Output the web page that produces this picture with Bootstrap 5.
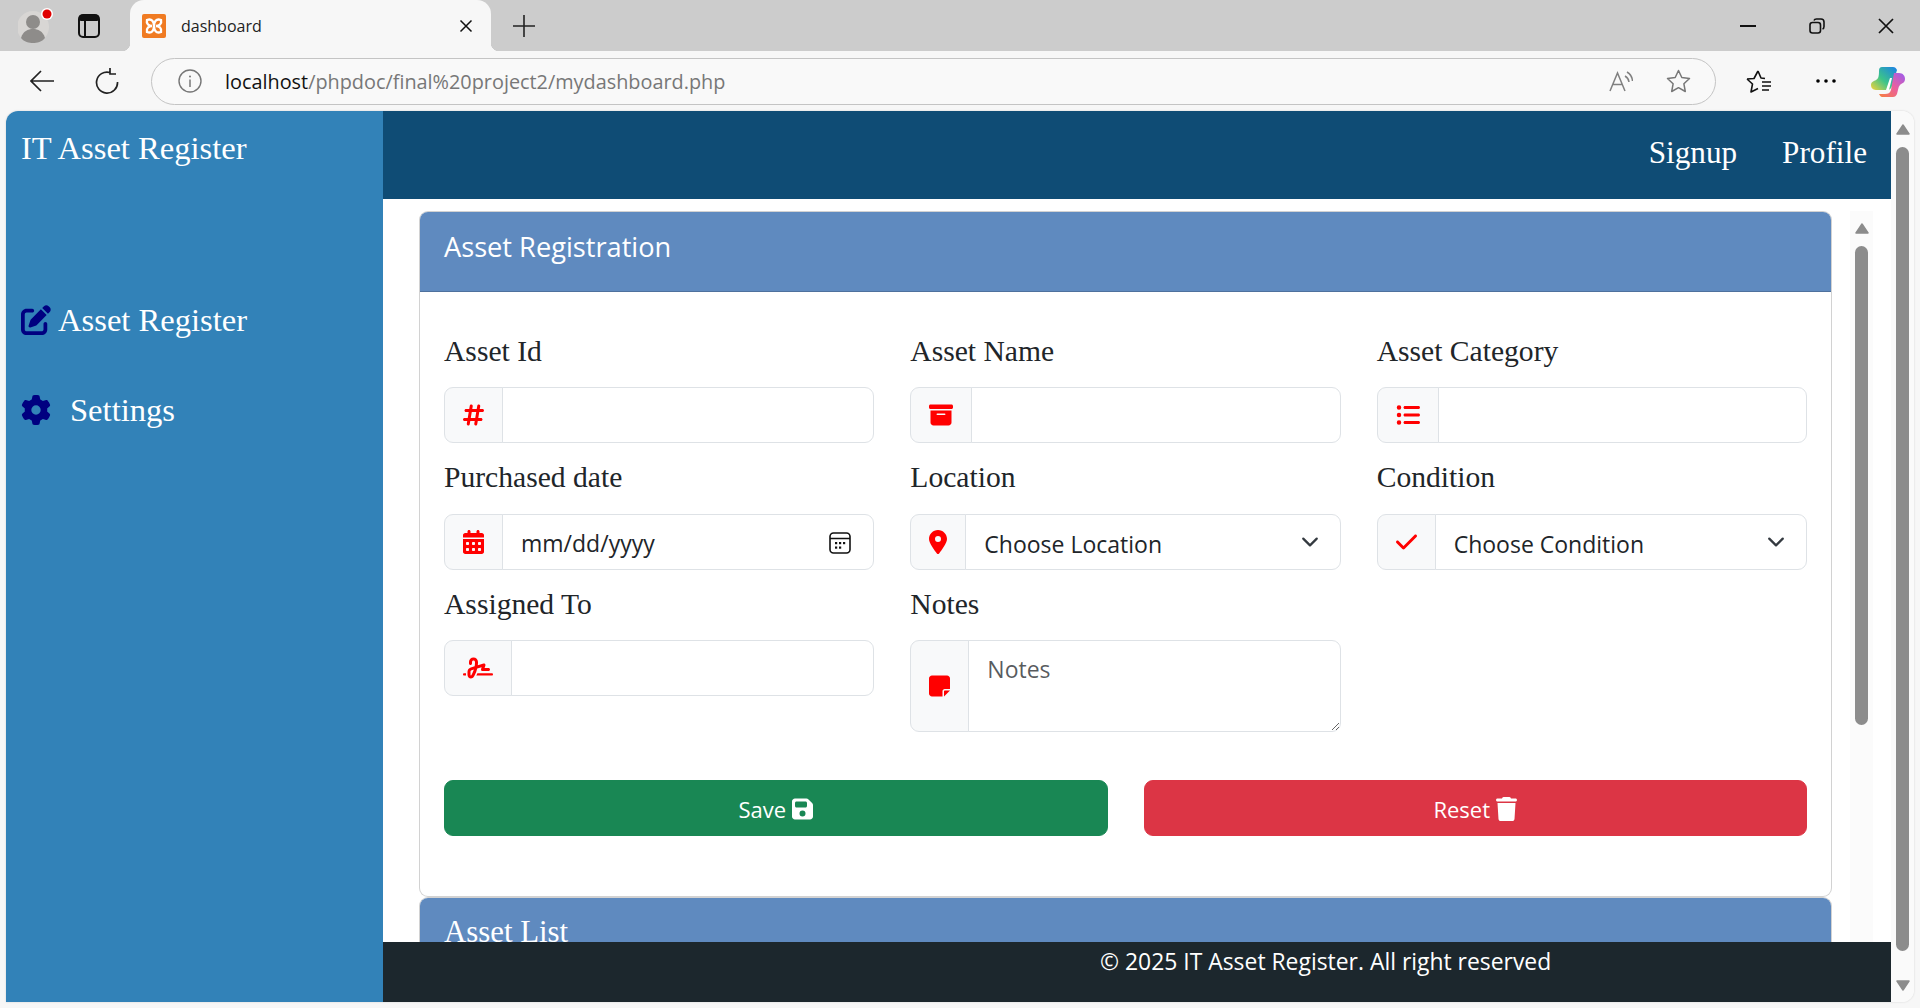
<!DOCTYPE html>
<html lang="en">
<head>
    <meta charset="UTF-8">
    <title>dashboard</title>
    <link href="https://cdn.jsdelivr.net/npm/bootstrap@5.3.0/dist/css/bootstrap.min.css" rel="stylesheet">
    <style>
        html { font-size: 24px; }
        body { --bs-body-font-family: "Open Sans", sans-serif; height: 1008px; overflow: hidden; background: #f7f7f7; }
        svg { display: block; flex: none; }

        /* browser chrome */
        .tab-strip { height: 51px; background: #ccc; padding-left: 130px; }
        .avatar-slot { margin-left: -130px; width: 130px; height: 51px; padding: 8px 0 0 18px; }
        .browser-tab { position: relative; width: 361px; height: 51px; background: #f7f7f7; border-radius: 14px 14px 0 0; font-size: 16px; color: #222; padding-left: 12px; }
        .browser-tab::before, .browser-tab::after { content: ""; position: absolute; bottom: 0; width: 8px; height: 8px; }
        .browser-tab::before { left: -8px; background: radial-gradient(circle at 0 0, #ccc 8px, #f7f7f7 8.5px); }
        .browser-tab::after { right: -8px; background: radial-gradient(circle at 100% 0, #ccc 8px, #f7f7f7 8.5px); }
        .tab-title { margin-left: 15px; width: 278px; }
        .toolbar { height: 60px; }
        .addr-bar { margin-left: 32px; width: 1565px; height: 47px; border: 1.5px solid #c4c4c4; border-radius: 24px; background: #f9f9f9; font-size: 19.85px; color: #777; }
        .addr-bar b { font-weight: 400; color: #111; }
        .addr-text { margin-left: 23px; padding-top: 1px; }

        /* viewport */
        .viewport { margin: 0 6px 0 6px; height: 891px; background: #fff; border-radius: 12px 12px 12px 0; overflow: hidden; box-shadow: 0 0 2px #ccc; }
        .side-panel { width: 377px; background: #3282b8; color: #fff; font-family: "Liberation Serif", serif; font-size: 32.6px; padding: 13px 0 0 15px; line-height: 48px; }
        .side-link { margin-top: 124px; }
        .side-link + .side-link { margin-top: 42px; }
        .side-link svg { fill: #000080; }
        .top-head { height: 88px; background: #0f4c75; color: #fff; font-family: "Liberation Serif", serif; font-size: 31.2px; padding: 0 24px 4px 0; gap: 45px; }
        .work-area { height: 743px; }
        .form-pane { margin-left: 36px; padding-top: 12px; width: 1413px; flex: none; }
        .pane-head { height: 80px; background: #5f8abf; color: #fff; font-size: 27.2px; padding: 0 24px 9px; border-bottom: 1px solid rgba(0,0,0,.175); border-radius: 8px 8px 0 0; }
        .field-label { display: block; margin: 12px 0 14.5px; line-height: 44px; font-family: "Liberation Serif", serif; font-size: 29.6px; color: #212529; }
        .form-control, .form-select { font-size: 23px; line-height: 36px; height: 56px; }
        .form-select { padding-top: 11px; padding-bottom: 9px; background-size: 24px 18px; }
        textarea.form-control { height: 92px; resize: both; padding-top: 10px; }
        input[type=date].form-control { padding-top: 11px; padding-bottom: 9px; }
        .form-control::-webkit-calendar-picker-indicator { width: 24px; height: 24px; padding: 0; margin: 0 3px 0 0;
            background: url("data:image/svg+xml,%3Csvg xmlns='http://www.w3.org/2000/svg' viewBox='0 0 24 24'%3E%3Crect x='2' y='2' width='20' height='20' rx='3.5' fill='none' stroke='%23111' stroke-width='1.6'/%3E%3Cpath d='M2 7.500h20' stroke='%23111' stroke-width='1.600'/%3E%3Cg fill='%23111'%3E%3Crect x='7' y='11' width='2.200' height='2.200'/%3E%3Crect x='11' y='11' width='2.200' height='2.200'/%3E%3Crect x='15' y='11' width='2.200' height='2.200'/%3E%3Crect x='7' y='15.500' width='2.200' height='2.200'/%3E%3Crect x='11' y='15.500' width='2.200' height='2.200'/%3E%3C/g%3E%3C/svg%3E") center/contain no-repeat; }
        .input-group-text svg { fill: #f00; height: 24px; }
        .btn-bar { margin-top: 48px; padding-bottom: 60px; }
        .btn { font-size: 22px; line-height: 36px; height: 56px; padding-top: 11px; padding-bottom: 9px; gap: 6px; }
        .btn svg { fill: #fff; height: 24px; }
        .list-head { height: 60px; background: #5f8abf; color: #fff; font-family: "Liberation Serif", serif; font-size: 30.8px; padding: 11px 24px 0; border-radius: 8px 8px 0 0; }
        .page-foot { height: 60px; background: #1c272d; color: #fff; font-size: 22.9px; line-height: 36px; padding: 2px 0 0 717px; }

        /* scrollbars */
        .scroll-col { width: 23px; flex: none; }
        .inner-scroll { margin-left: 18px; margin-top: 12px; background: #fbfbfb; padding-top: 12px; }
        .scroll-arrow { margin: 0 auto; }
        .scroll-thumb { width: 13px; margin: 12px auto 0; background: #8c8c8c; border-radius: 7px; }
        .outer-scroll { background: #fafafa; padding-top: 13px; }
        .outer-scroll .scroll-thumb { height: 804px; }
        .outer-scroll .arrow-down { margin-top: 29px; }
        .inner-scroll .scroll-thumb { height: 479px; }
    </style>
</head>
<body>
    <!-- tab strip -->
    <div class="tab-strip d-flex align-items-center">
        <div class="avatar-slot d-flex align-items-start">
            <svg width="36" height="36" viewBox="0 0 36 36"><circle cx="15" cy="19" r="16" fill="#d8d6d4"/><circle cx="15" cy="14" r="7" fill="#8e8c8a"/><path d="M3 30c2-7 7-9 12-9s10 2 12 9c-3 4-8 5-12 5s-9-1-12-5z" fill="#8e8c8a"/><circle cx="29" cy="6" r="6" fill="#fff"/><circle cx="29" cy="6" r="4.5" fill="#e00000"/></svg>
            <svg class="ms-3" width="22" height="24" viewBox="0 0 22 24" style="margin-top:6px"><rect x="1" y="1" width="20" height="22" rx="4" fill="none" stroke="#111" stroke-width="2"/><rect x="1" y="1" width="20" height="6" rx="2" fill="#111"/><path d="M7 6v17" stroke="#111" stroke-width="2"/></svg>
        </div>
        <div class="browser-tab d-flex align-items-center">
            <svg width="24" height="24" viewBox="0 0 24 24"><rect width="24" height="24" rx="2" fill="#f07b22"/><path d="M5 6c5-2 7 2 7 6 0-4 2-8 7-6 1 4-2 6-5 6 3 0 6 2 5 6-5 2-7-2-7-6 0 4-2 8-7 6-1-4 2-6 5-6-3 0-6-2-5-6z" fill="none" stroke="#fff" stroke-width="2.4"/></svg>
            <span class="tab-title">dashboard</span>
            <svg width="14" height="14" viewBox="0 0 14 14"><path d="M1.5 1.5l11 11M12.5 1.5l-11 11" stroke="#111" stroke-width="1.5"/></svg>
        </div>
        <svg style="margin-left:22px" width="22" height="22" viewBox="0 0 22 22"><path d="M11 0v22M0 11h22" stroke="#222" stroke-width="1.6"/></svg>
        <div class="ms-auto d-flex align-items-center" style="gap:53px;padding-right:26px">
            <svg width="16" height="2" viewBox="0 0 16 2"><path d="M0 1h16" stroke="#111" stroke-width="2"/></svg>
            <svg width="16" height="16" viewBox="0 0 16 16"><rect x="1" y="4.5" width="10.5" height="10.5" rx="2.5" fill="none" stroke="#111" stroke-width="1.6"/><path d="M5 2.5q.5-1.5 2.5-1.5h4.5q3 0 3 3v4.500q0 2-1.500 2.500" fill="none" stroke="#111" stroke-width="1.600"/></svg>
            <svg width="16" height="16" viewBox="0 0 16 16"><path d="M1 1l14 14M15 1L1 15" stroke="#111" stroke-width="1.700"/></svg>
        </div>
    </div>

    <!-- toolbar -->
    <div class="toolbar d-flex align-items-center">
        <svg style="margin-left:30px" width="24" height="22" viewBox="0 0 24 22"><path d="M11 1L1 11l10 10M1 11h23" fill="none" stroke="#222" stroke-width="1.7"/></svg>
        <svg style="margin-left:41px" width="24" height="26" viewBox="0 0 24 26"><path d="M15 4.500A10.500 10.500 0 1 0 22.500 14M15 0v6h6" fill="none" stroke="#222" stroke-width="1.700"/></svg>
        <div class="addr-bar d-flex align-items-center">
            <svg style="margin-left:26px" width="24" height="24" viewBox="0 0 24 24"><circle cx="12" cy="12" r="11" fill="none" stroke="#777" stroke-width="1.400"/><path d="M12 10.500v7.500" stroke="#777" stroke-width="1.500"/><circle cx="12" cy="7.500" r="1" fill="#777"/></svg>
            <span class="addr-text"><b>localhost</b>/phpdoc/final%20project2/mydashboard.php</span>
            <svg class="ms-auto" width="24" height="22" viewBox="0 0 24 22"><path d="M1 21L8.500 3 16 21M4 14.500h9.500M16 6q3.500 2 4 6M18 2q5 3 5.500 9" fill="none" stroke="#808080" stroke-width="1.500"/></svg>
            <svg style="margin:0 24px 0 33px" width="25" height="24" viewBox="0 0 25 24"><path d="M12.500 1.500l3.300 7 7.700 1-5.600 5.300 1.400 7.700-6.800-3.800-6.800 3.800 1.400-7.700L1.500 9.500l7.700-1z" fill="none" stroke="#777" stroke-width="1.500" stroke-linejoin="round"/></svg>
        </div>
        <svg style="margin-left:30px" width="25" height="25" viewBox="0 0 25 25"><path d="M12 2l3 7 4 .5M1 10l7-.5L12 2M1 10l5.500 5-1.500 8 7-3.500M16 13h9M16 17h9M16 21h7" fill="none" stroke="#111" stroke-width="1.600" stroke-linejoin="round"/></svg>
        <svg style="margin-left:45px" width="20" height="4" viewBox="0 0 20 4"><circle cx="2" cy="2" r="1.800"/><circle cx="10" cy="2" r="1.800"/><circle cx="18" cy="2" r="1.800"/></svg>
        <svg style="margin-left:35px" width="34" height="31" viewBox="0 0 34 31">
            <defs>
                <linearGradient id="cpA" x1="0" y1="1" x2="1" y2="0"><stop offset="0" stop-color="#f5d23a"/><stop offset=".45" stop-color="#3cc48a"/><stop offset="1" stop-color="#1a7fe8"/></linearGradient>
                <linearGradient id="cpB" x1="0" y1="1" x2="1" y2="0"><stop offset="0" stop-color="#f7803c"/><stop offset=".5" stop-color="#ea5f9e"/><stop offset="1" stop-color="#9a5cf0"/></linearGradient>
            </defs>
            <path d="M11 1h11c2 0 3 1 4 3l-5 16c-1 3-3 4-5 4H6c-3 0-6-1-6-5 0-3 3-4 5-5 2-1 3-3 3-9 0-3 1-4 3-4z" fill="url(#cpA)"/>
            <path d="M23 7h5c4 0 6 3 6 6 0 4-3 4-5 6-2 2-2 6-3 9-1 2-2 3-4 3H11c-1 0-2-1-3-3h6c3 0 5-1 6-4z" fill="url(#cpB)"/>
            <path d="M19 12l-4 12h3l3-12z" fill="#fff"/>
        </svg>
    </div>

    <!-- page -->
    <div class="viewport d-flex">
        <aside class="side-panel">
            <div>IT Asset Register</div>
            <div class="side-link d-flex align-items-center">
                <svg height="30" viewBox="0 0 512 512"><path d="M471.6 21.7c-21.9-21.9-57.3-21.9-79.2 0L362.3 51.7l97.9 97.9 30.1-30.1c21.9-21.9 21.9-57.3 0-79.2L471.6 21.7zm-299.2 220c-6.1 6.1-10.8 13.6-13.5 21.9l-29.6 88.8c-2.9 8.6-.6 18.1 5.8 24.6s15.900 8.700 24.600 5.800l88.800-29.600c8.200-2.700 15.700-7.400 21.900-13.500L437.700 172.300 339.700 74.300 172.400 241.700zM96 64C43 64 0 107 0 160V416c0 53 43 96 96 96H352c53 0 96-43 96-96V320c0-17.700-14.300-32-32-32s-32 14.300-32 32v96c0 17.700-14.300 32-32 32H96c-17.700 0-32-14.300-32-32V160c0-17.700 14.300-32 32-32h96c17.700 0 32-14.300 32-32s-14.300-32-32-32H96z"/></svg>
                <span style="margin-left:7px">Asset Register</span>
            </div>
            <div class="side-link d-flex align-items-center">
                <svg height="30" viewBox="0 0 512 512"><path d="M495.900 166.600c3.200 8.700 .5 18.400-6.400 24.600l-43.300 39.400c1.100 8.300 1.700 16.800 1.700 25.400s-.6 17.100-1.700 25.400l43.300 39.400c6.900 6.200 9.600 15.900 6.400 24.600c-4.400 11.900-9.700 23.300-15.800 34.300l-4.700 8.100c-6.600 11-14 21.400-22.100 31.200c-5.900 7.200-15.700 9.600-24.500 6.800l-55.700-17.700c-13.400 10.300-28.200 18.900-44 25.400l-12.500 57.100c-2 9.100-9 16.300-18.200 17.800c-13.800 2.300-28 3.500-42.500 3.500s-28.700-1.200-42.500-3.500c-9.200-1.500-16.200-8.700-18.200-17.800l-12.500-57.100c-15.800-6.500-30.600-15.100-44-25.400L83.100 425.900c-8.800 2.800-18.600 .3-24.500-6.800c-8.100-9.800-15.500-20.200-22.100-31.200l-4.700-8.100c-6.100-11-11.400-22.400-15.800-34.300c-3.200-8.700-.5-18.400 6.400-24.600l43.300-39.400C64.600 273.100 64 264.600 64 256s.6-17.100 1.700-25.400L22.400 191.200c-6.900-6.200-9.600-15.900-6.400-24.600c4.400-11.900 9.700-23.300 15.800-34.300l4.700-8.100c6.600-11 14-21.400 22.100-31.200c5.900-7.200 15.700-9.600 24.500-6.800l55.700 17.700c13.400-10.300 28.200-18.900 44-25.400l12.500-57.100c2-9.100 9-16.300 18.200-17.800C227.300 1.200 241.500 0 256 0s28.700 1.200 42.500 3.500c9.200 1.500 16.200 8.700 18.200 17.800l12.500 57.100c15.800 6.500 30.600 15.100 44 25.400l55.700-17.700c8.800-2.800 18.600-.3 24.500 6.800c8.100 9.800 15.500 20.200 22.100 31.200l4.700 8.100c6.100 11 11.400 22.400 15.800 34.300zM256 336a80 80 0 1 0 0-160 80 80 0 1 0 0 160z"/></svg>
                <span style="margin-left:19px">Settings</span>
            </div>
        </aside>

        <div class="flex-grow-1 d-flex flex-column">
            <header class="top-head d-flex align-items-center justify-content-end">
                <span>Signup</span>
                <span>Profile</span>
            </header>

            <div class="work-area d-flex overflow-hidden">
                <div class="form-pane">
                    <div class="card">
                        <div class="pane-head d-flex align-items-center">Asset Registration</div>
                        <div class="card-body" style="padding-top:24.5px;padding-bottom:0">
                            <div class="row">
                                <div class="col-4">
                                    <label class="field-label">Asset Id</label>
                                    <div class="input-group">
                                        <span class="input-group-text"><svg viewBox="0 0 448 512"><path d="M181.300 32.400c17.400 2.900 29.200 19.400 26.300 36.800L197.800 128h95.100l11.500-69.300c2.900-17.400 19.400-29.200 36.800-26.300s29.200 19.400 26.300 36.800L357.800 128H416c17.700 0 32 14.300 32 32s-14.300 32-32 32H347.100L325.800 320H384c17.700 0 32 14.300 32 32s-14.300 32-32 32H315.100l-11.500 69.300c-2.900 17.400-19.400 29.200-36.800 26.300s-29.200-19.400-26.300-36.800l9.800-58.700H155.100l-11.500 69.300c-2.900 17.400-19.400 29.200-36.800 26.300s-29.200-19.400-26.300-36.800L90.200 384H32c-17.700 0-32-14.300-32-32s14.300-32 32-32h68.900l21.300-128H64c-17.700 0-32-14.300-32-32s14.300-32 32-32h68.900l11.500-69.300c2.900-17.400 19.400-29.200 36.800-26.300zM187.100 192L165.800 320h95.100l21.300-128H187.100z"/></svg></span>
                                        <input type="text" class="form-control">
                                    </div>
                                </div>
                                <div class="col-4">
                                    <label class="field-label">Asset Name</label>
                                    <div class="input-group">
                                        <span class="input-group-text"><svg viewBox="0 0 512 512"><path d="M32 32H480c17.700 0 32 14.300 32 32V96c0 17.700-14.300 32-32 32H32C14.300 128 0 113.700 0 96V64C0 46.300 14.300 32 32 32zm0 128H480V416c0 35.300-28.700 64-64 64H96c-35.300 0-64-28.700-64-64V160zm128 80c0 8.800 7.200 16 16 16H336c8.800 0 16-7.200 16-16s-7.200-16-16-16H176c-8.800 0-16 7.200-16 16z"/></svg></span>
                                        <input type="text" class="form-control">
                                    </div>
                                </div>
                                <div class="col-4">
                                    <label class="field-label">Asset Category</label>
                                    <div class="input-group">
                                        <span class="input-group-text"><svg viewBox="0 0 512 512"><path d="M64 144a48 48 0 1 0 0-96 48 48 0 1 0 0 96zM192 64c-17.700 0-32 14.300-32 32s14.300 32 32 32H480c17.700 0 32-14.300 32-32s-14.300-32-32-32H192zm0 160c-17.700 0-32 14.300-32 32s14.300 32 32 32H480c17.700 0 32-14.300 32-32s-14.300-32-32-32H192zm0 160c-17.700 0-32 14.300-32 32s14.300 32 32 32H480c17.700 0 32-14.300 32-32s-14.300-32-32-32H192zM64 464a48 48 0 1 0 0-96 48 48 0 1 0 0 96zm48-208a48 48 0 1 0 -96 0 48 48 0 1 0 96 0z"/></svg></span>
                                        <input type="text" class="form-control">
                                    </div>
                                </div>
                                <div class="col-4">
                                    <label class="field-label">Purchased date</label>
                                    <div class="input-group">
                                        <span class="input-group-text"><svg viewBox="0 0 448 512"><path d="M128 0c17.700 0 32 14.300 32 32V64H288V32c0-17.700 14.300-32 32-32s32 14.300 32 32V64h48c26.500 0 48 21.500 48 48v48H0V112C0 85.500 21.500 64 48 64H96V32c0-17.700 14.300-32 32-32zM0 192H448V464c0 26.500-21.500 48-48 48H48c-26.500 0-48-21.500-48-48V192zm64 80v32c0 8.800 7.200 16 16 16h32c8.800 0 16-7.200 16-16V272c0-8.800-7.200-16-16-16H80c-8.800 0-16 7.200-16 16zm128 0v32c0 8.800 7.200 16 16 16h32c8.800 0 16-7.200 16-16V272c0-8.800-7.200-16-16-16H208c-8.800 0-16 7.200-16 16zm144-16c-8.800 0-16 7.200-16 16v32c0 8.800 7.200 16 16 16h32c8.800 0 16-7.200 16-16V272c0-8.800-7.200-16-16-16H336zM64 400v32c0 8.800 7.200 16 16 16h32c8.800 0 16-7.200 16-16V400c0-8.800-7.200-16-16-16H80c-8.800 0-16 7.200-16 16zm144-16c-8.800 0-16 7.200-16 16v32c0 8.800 7.200 16 16 16h32c8.800 0 16-7.200 16-16V400c0-8.800-7.200-16-16-16H208zm112 16v32c0 8.800 7.200 16 16 16h32c8.800 0 16-7.200 16-16V400c0-8.800-7.200-16-16-16H336c-8.800 0-16 7.200-16 16z"/></svg></span>
                                        <input type="date" class="form-control">
                                    </div>
                                </div>
                                <div class="col-4">
                                    <label class="field-label">Location</label>
                                    <div class="input-group">
                                        <span class="input-group-text"><svg viewBox="0 0 384 512"><path d="M215.700 499.200C267 435 384 279.400 384 192C384 86 298 0 192 0S0 86 0 192c0 87.400 117 243 168.300 307.200c12.300 15.300 35.100 15.300 47.400 0zM192 128a64 64 0 1 1 0 128 64 64 0 1 1 0-128z"/></svg></span>
                                        <select class="form-select"><option>Choose Location</option></select>
                                    </div>
                                </div>
                                <div class="col-4">
                                    <label class="field-label">Condition</label>
                                    <div class="input-group">
                                        <span class="input-group-text"><svg viewBox="0 0 448 512"><path d="M438.600 105.400c12.500 12.500 12.500 32.800 0 45.300l-256 256c-12.500 12.500-32.800 12.500-45.300 0l-128-128c-12.500-12.500-12.500-32.800 0-45.300s32.800-12.500 45.300 0L160 338.700 393.400 105.400c12.500-12.500 32.800-12.500 45.300 0z"/></svg></span>
                                        <select class="form-select"><option>Choose Condition</option></select>
                                    </div>
                                </div>
                                <div class="col-4">
                                    <label class="field-label">Assigned To</label>
                                    <div class="input-group">
                                        <span class="input-group-text"><svg viewBox="0 0 640 512"><path d="M192 128c0-17.700 14.300-32 32-32s32 14.300 32 32v7.800c0 27.700-2.400 55.300-7.100 82.500l-84.400 25.300c-40.600 12.200-68.500 49.600-68.500 92v71.900c0 40 32.500 72.500 72.500 72.500c26 0 50-13.900 62.900-36.500l13.900-24.300c26.800-47 46.500-97.700 58.400-150.500l94.400-28.300-12.500 37.500c-3.300 9.800-1.600 20.500 4.400 28.800s15.700 13.300 26 13.300H544c17.700 0 32-14.300 32-32s-14.300-32-32-32H460.400l18-53.900c3.800-11.300 .9-23.800-7.400-32.400s-20.700-11.800-32.200-8.400L316.400 198.100c2.400-20.700 3.600-41.400 3.600-62.300V128c0-53-43-96-96-96s-96 43-96 96v32c0 17.700 14.300 32 32 32s32-14.300 32-32V128zm-9.200 177l49-14.700c-10.400 33.800-24.500 66.400-42.100 97.200l-13.900 24.300c-1.500 2.600-4.300 4.300-7.400 4.300c-4.700 0-8.500-3.800-8.500-8.500V335.600c0-14.100 9.300-26.600 22.800-30.700zM24 368c-13.300 0-24 10.700-24 24s10.700 24 24 24H64.300c-.2-2.800-.3-5.600-.3-8.500V368H24zm592 48c13.300 0 24-10.700 24-24s-10.700-24-24-24H305.900c-6.700 16.300-14.200 32.300-22.300 48H616z"/></svg></span>
                                        <input type="text" class="form-control">
                                    </div>
                                </div>
                                <div class="col-4">
                                    <label class="field-label">Notes</label>
                                    <div class="input-group">
                                        <span class="input-group-text"><svg viewBox="0 0 448 512"><path d="M64 32C28.700 32 0 60.700 0 96V416c0 35.300 28.700 64 64 64H288V368c0-26.500 21.500-48 48-48H448V96c0-35.300-28.700-64-64-64H64zM448 352H402.700 336c-8.800 0-16 7.200-16 16v66.700V480l32-32 64-64 32-32z"/></svg></span>
                                        <textarea class="form-control" rows="2" placeholder="Notes"></textarea>
                                    </div>
                                </div>
                            </div>
                            <div class="row btn-bar">
                                <div class="col-6">
                                    <button class="btn btn-success w-100 d-flex align-items-center justify-content-center">Save <svg viewBox="0 0 448 512"><path d="M64 32C28.700 32 0 60.700 0 96V416c0 35.300 28.700 64 64 64H384c35.300 0 64-28.700 64-64V173.300c0-17-6.700-33.300-18.700-45.300L352 50.700C340 38.700 323.700 32 306.700 32H64zm0 96c0-17.700 14.300-32 32-32H288c17.700 0 32 14.300 32 32v64c0 17.700-14.300 32-32 32H96c-17.700 0-32-14.300-32-32V128zM224 288a64 64 0 1 1 0 128 64 64 0 1 1 0-128z"/></svg></button>
                                </div>
                                <div class="col-6">
                                    <button class="btn btn-danger w-100 d-flex align-items-center justify-content-center">Reset <svg viewBox="0 0 448 512"><path d="M135.200 17.700L128 32H32C14.300 32 0 46.300 0 64S14.300 96 32 96H416c17.700 0 32-14.300 32-32s-14.300-32-32-32H320l-7.200-14.300C307.400 6.800 296.300 0 284.200 0H163.800c-12.100 0-23.200 6.800-28.600 17.700zM416 128H32L53.200 467c1.600 25.300 22.600 45 47.900 45H346.900c25.300 0 46.300-19.700 47.900-45L416 128z"/></svg></button>
                                </div>
                            </div>
                        </div>
                    </div>
                    <div class="card">
                        <div class="list-head">Asset List</div>
                    </div>
                </div>

                <div class="scroll-col inner-scroll">
                    <svg class="scroll-arrow" width="14" height="11" viewBox="0 0 14 11"><path d="M7 1L13 10H1z" fill="#8c8c8c" stroke="#8c8c8c" stroke-width="1.500" stroke-linejoin="round"/></svg>
                    <div class="scroll-thumb"></div>
                </div>
            </div>

            <footer class="page-foot">© 2025 IT Asset Register. All right reserved</footer>
        </div>

        <div class="scroll-col outer-scroll">
            <svg class="scroll-arrow" width="14" height="11" viewBox="0 0 14 11"><path d="M7 1L13 10H1z" fill="#8c8c8c" stroke="#8c8c8c" stroke-width="1.500" stroke-linejoin="round"/></svg>
            <div class="scroll-thumb"></div>
            <svg class="scroll-arrow arrow-down" width="14" height="11" viewBox="0 0 14 11"><path d="M7 10L13 1H1z" fill="#8c8c8c" stroke="#8c8c8c" stroke-width="1.500" stroke-linejoin="round"/></svg>
        </div>
    </div>

    <script src="https://cdn.jsdelivr.net/npm/bootstrap@5.3.0/dist/js/bootstrap.bundle.min.js"></script>
</body>
</html>
